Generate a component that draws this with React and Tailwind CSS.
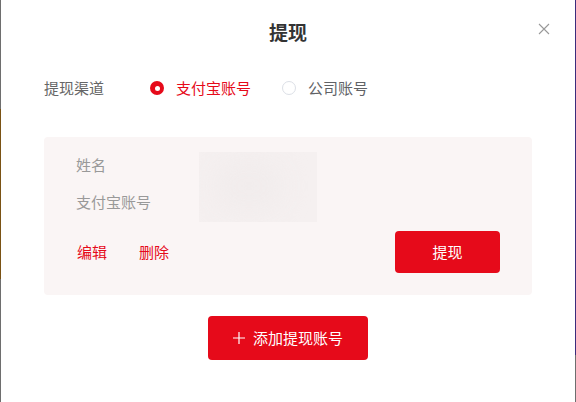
import React from 'react';

const RED = 'bg-[#e60a1a]';

const Radio = ({ checked, label }) => (
  <label className="flex items-center cursor-pointer">
    {checked ? (
      <span className={`w-[14px] h-[14px] rounded-full ${RED} flex items-center justify-center`}>
        <span className="w-[5px] h-[5px] rounded-full bg-white" />
      </span>
    ) : (
      <span className="w-[14px] h-[14px] rounded-full border border-[#dcdfe6] bg-white" />
    )}
    <span className={`ml-[12px] ${checked ? 'text-[#e60a1a]' : 'text-[#606266]'}`}>{label}</span>
  </label>
);

export default function App() {
  return (
    <div
      className="w-[576px] h-[402px] flex overflow-hidden text-[15px] leading-[22px]"
      style={{ fontFamily: '"Noto Sans CJK SC", "Noto Sans", sans-serif' }}
    >
      {/* backdrop peeking at the left edge */}
      <div className="w-px flex flex-col">
        <div className="h-[109px] bg-[#6e6e6e]" />
        <div className="h-[170px] bg-[#7a5214]" />
        <div className="flex-1 bg-[#6e6e6e]" />
      </div>

      <div className="flex-1 bg-white flex flex-col px-[43px]">
        {/* Header */}
        <div className="relative pt-[19px] text-center">
          <h2 className="text-[19px] leading-[26px] font-bold text-[#333]">提现</h2>
          <button className="absolute right-[-18px] top-[23px] w-[12px] h-[12px] text-[#999]">
            <svg viewBox="0 0 12 12" width="12" height="12" stroke="currentColor" strokeWidth="1.1">
              <path d="M1 1L11 11M11 1L1 11" />
            </svg>
          </button>
        </div>

        {/* Channel */}
        <div className="mt-[32px] flex items-center">
          <span className="w-[106px] text-[#666]">提现渠道</span>
          <div className="mr-[31px]">
            <Radio checked label="支付宝账号" />
          </div>
          <Radio label="公司账号" />
        </div>

        {/* Account card */}
        <div className="mt-[38px] bg-[#faf5f5] rounded-[4px] pt-[15px] pb-[22px] px-[32px]">
          <div className="flex">
            <div className="w-[123px] flex flex-col gap-[15px] pt-[2px] text-[#999]">
              <span>姓名</span>
              <span>支付宝账号</span>
            </div>
            <div className="relative w-[118px] h-[70px] bg-[#f5f0f0] overflow-hidden">
              <div className="absolute left-[15px] top-[8px] w-[70px] h-[52px] rounded-full bg-[#f1ecec] blur-md" />
            </div>
          </div>
          <div className="mt-[9px] flex items-center">
            <div className="flex gap-[32px] text-[#e60a1a] pl-[1px]">
              <button>编辑</button>
              <button>删除</button>
            </div>
            <button className={`ml-auto w-[105px] h-[42px] rounded-[4px] ${RED} text-white`}>提现</button>
          </div>
        </div>

        {/* Add account */}
        <div className="mt-[21px] flex justify-center">
          <button className={`w-[160px] h-[44px] rounded-[4px] ${RED} text-white flex items-center justify-center gap-[8px]`}>
            <svg viewBox="0 0 12 12" width="12" height="12" stroke="currentColor" strokeWidth="1.2">
              <path d="M6 0V12M0 6H12" />
            </svg>
            <span>添加提现账号</span>
          </button>
        </div>
      </div>

      {/* backdrop peeking at the right edge */}
      <div className="w-px flex flex-col">
        <div className="h-[355px] bg-[#3b2c7c]" />
        <div className="flex-1 bg-[#6e6e6e]" />
      </div>
    </div>
  );
}
